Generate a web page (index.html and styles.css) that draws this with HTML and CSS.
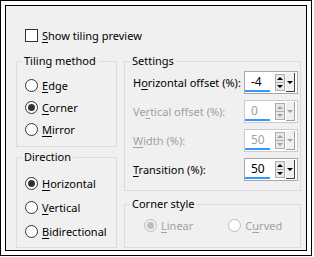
FILE: index.html
```html
<!DOCTYPE html>
<html lang="en">
  <head>
    <meta charset="UTF-8" />
    <title>Tiling settings</title>
    <link rel="stylesheet" href="styles.css">
  </head>
  <body>
    <div class="frame">
      <div class="dialog">
        <!-- preview toggle -->
        <label class="check-row">
          <span class="checkbox"></span>
          <span><u>S</u>how tiling preview</span>
        </label>

        <div class="columns">
          <!-- left column -->
          <div class="col-left">
            <fieldset class="group tiling">
              <legend>Tiling method</legend>
              <div class="radio-row"><span class="radio"></span><span><u>E</u>dge</span></div>
              <div class="radio-row"><span class="radio checked"></span><span><u>C</u>orner</span></div>
              <div class="radio-row"><span class="radio"></span><span><u>M</u>irror</span></div>
            </fieldset>

            <fieldset class="group direction">
              <legend>Direction</legend>
              <div class="radio-row"><span class="radio checked"></span><span><u>H</u>orizontal</span></div>
              <div class="radio-row"><span class="radio"></span><span><u>V</u>ertical</span></div>
              <div class="radio-row"><span class="radio"></span><span><u>B</u>idirectional</span></div>
            </fieldset>
          </div>

          <!-- right column -->
          <div class="col-right">
            <fieldset class="group settings">
              <legend>Settings</legend>
              <div class="field-list">
                <div class="field-row">
                  <span class="field-label">H<u>o</u>rizontal offset (%):</span>
                  <div class="spin">
                    <div class="spin-edit"><span class="spin-value">-4</span><i class="spin-bar"></i></div>
                    <div class="updown"><i class="arr-up"></i><i class="sep"></i><i class="arr-down"></i></div>
                    <div class="drop"><i class="arr-down"></i></div>
                  </div>
                </div>
                <div class="field-row disabled">
                  <span class="field-label">Ve<u>r</u>tical offset (%):</span>
                  <div class="spin">
                    <div class="spin-edit"><span class="spin-value">0</span><i class="spin-bar"></i></div>
                    <div class="updown"><i class="arr-up"></i><i class="sep"></i><i class="arr-down"></i></div>
                    <div class="drop"><i class="arr-down"></i></div>
                  </div>
                </div>
                <div class="field-row disabled">
                  <span class="field-label"><u>W</u>idth (%):</span>
                  <div class="spin">
                    <div class="spin-edit"><span class="spin-value">50</span><i class="spin-bar"></i></div>
                    <div class="updown"><i class="arr-up"></i><i class="sep"></i><i class="arr-down"></i></div>
                    <div class="drop"><i class="arr-down"></i></div>
                  </div>
                </div>
                <div class="field-row">
                  <span class="field-label"><u>T</u>ransition (%):</span>
                  <div class="spin">
                    <div class="spin-edit"><span class="spin-value">50</span><i class="spin-bar"></i></div>
                    <div class="updown"><i class="arr-up"></i><i class="sep"></i><i class="arr-down"></i></div>
                    <div class="drop"><i class="arr-down"></i></div>
                  </div>
                </div>
              </div>
            </fieldset>

            <fieldset class="group corner">
              <legend>Corner style</legend>
              <div class="corner-row disabled">
                <div class="radio-row"><span class="radio checked"></span><span><u>L</u>inear</span></div>
                <div class="radio-row"><span class="radio"></span><span>C<u>u</u>rved</span></div>
              </div>
            </fieldset>
          </div>
        </div>
      </div>
    </div>
  </body>
</html>
```

FILE: styles.css
```css
* {
  box-sizing: border-box;
  margin: 0;
  padding: 0;
}

:root {
  --face: #f0f0f0;
  --group-line: #dcdcdc;
  --text: #000;
  --muted: #a0a0a0;
  --accent: #3399ff;
}

body {
  width: 314px;
  height: 257px;
  background-color: #fff;
  font-family: 'Noto Sans', sans-serif;
  font-size: 11px;
  color: var(--text);
}

u {
  text-decoration-thickness: 1px;
  text-underline-offset: 2px;
}

i {
  display: block;
}

.frame {
  width: 312px;
  height: 256px;
  border: 1px solid #000;
  padding: 4px;
  background-color: #fff;
}

.dialog {
  height: 100%;
  border: 1px solid #000;
  background-color: var(--face);
  padding: 21px 5px 0 10px;
}

.check-row {
  display: flex;
  align-items: center;
  gap: 4px;
  height: 16px;
  padding-left: 9px;
}

.checkbox {
  width: 13px;
  height: 13px;
  border: 1px solid #333;
  background-color: #fff;
}

.columns {
  display: flex;
  gap: 7px;
  margin-top: 10px;
}

.col-left {
  width: 101px;
  flex-shrink: 0;
  display: flex;
  flex-direction: column;
}

.col-right {
  flex-grow: 1;
  display: flex;
  flex-direction: column;
}

/* group boxes */
.group {
  border: 1px solid var(--group-line);
  min-width: 0;
  padding: 0 0 0 8px;
}

.group legend {
  margin-left: -3px;
  padding: 0 2px;
  line-height: 16px;
}

.tiling {
  padding-top: 5px;
  padding-bottom: 6px;
}

.direction {
  margin-top: 2px;
  padding-top: 6px;
  padding-bottom: 4px;
}

.radio-row {
  display: flex;
  align-items: center;
  gap: 4px;
  height: 22px;
}

.direction .radio-row {
  height: 24px;
}

.radio {
  width: 13px;
  height: 13px;
  border: 1px solid #333;
  border-radius: 50%;
  background-color: #fff;
  display: flex;
  align-items: center;
  justify-content: center;
}

.radio.checked::after {
  content: '';
  width: 7px;
  height: 7px;
  border-radius: 50%;
  background-color: #333;
}

/* settings */
.settings {
  padding: 2px 2px 9px 8px;
}

.field-list {
  display: flex;
  flex-direction: column;
  gap: 6px;
}

.field-row {
  display: flex;
  align-items: center;
  height: 23px;
  white-space: nowrap;
}

.field-label {
  flex-grow: 1;
}

.disabled {
  color: var(--muted);
}

.spin {
  flex: none;
  display: flex;
  align-items: center;
  width: 54px;
  height: 23px;
  border: 1px solid #a8a8a8;
  background-color: #fff;
}

.disabled .spin {
  border-color: #cccccc;
}

.spin-edit {
  flex: none;
  width: 30px;
  height: 100%;
  display: flex;
  flex-direction: column;
  padding-top: 2px;
  color: #000;
  font-size: 12px;
  line-height: 16px;
}

.spin-value {
  padding-left: 6px;
}

.disabled .spin-edit {
  color: var(--muted);
}

.spin-bar {
  width: 25px;
  height: 2px;
  margin-top: auto;
  margin-bottom: 1px;
  background-color: var(--accent);
}

.updown {
  flex: none;
  width: 10px;
  height: 17px;
  border: 1px solid #adadad;
  background-color: #e8e8e8;
  display: flex;
  flex-direction: column;
  align-items: center;
  justify-content: space-between;
  padding: 2px 0;
}

.sep {
  width: 100%;
  height: 1px;
  background-color: #adadad;
}

.drop {
  flex: none;
  width: 9px;
  height: 19px;
  margin-left: 1px;
  background-color: #f0f0f0;
  border-right: 1px solid #404040;
  border-bottom: 1px solid #404040;
  display: flex;
  align-items: center;
  justify-content: center;
}

.arr-up,
.arr-down {
  width: 0;
  height: 0;
  border-left: 3px solid transparent;
  border-right: 3px solid transparent;
}

.arr-up {
  border-bottom: 3px solid #000;
}

.arr-down {
  border-top: 3px solid #000;
}

.disabled .arr-up {
  border-bottom-color: #a0a0a0;
}

.disabled .arr-down {
  border-top-color: #a0a0a0;
}

.disabled .drop {
  border-color: #a0a0a0;
}

/* corner style */
.corner {
  margin-top: 5px;
  padding: 2px 0 8px 0;
  flex-grow: 1;
}

.corner legend {
  margin-left: 5px;
}

.corner-row {
  display: flex;
  gap: 35px;
  padding-left: 19px;
}

.corner .radio {
  border-color: #bcbcbc;
}

.corner .radio.checked {
  background-color: #f0f0f0;
}

.corner .radio.checked::after {
  background-color: #bcbcbc;
}
```
